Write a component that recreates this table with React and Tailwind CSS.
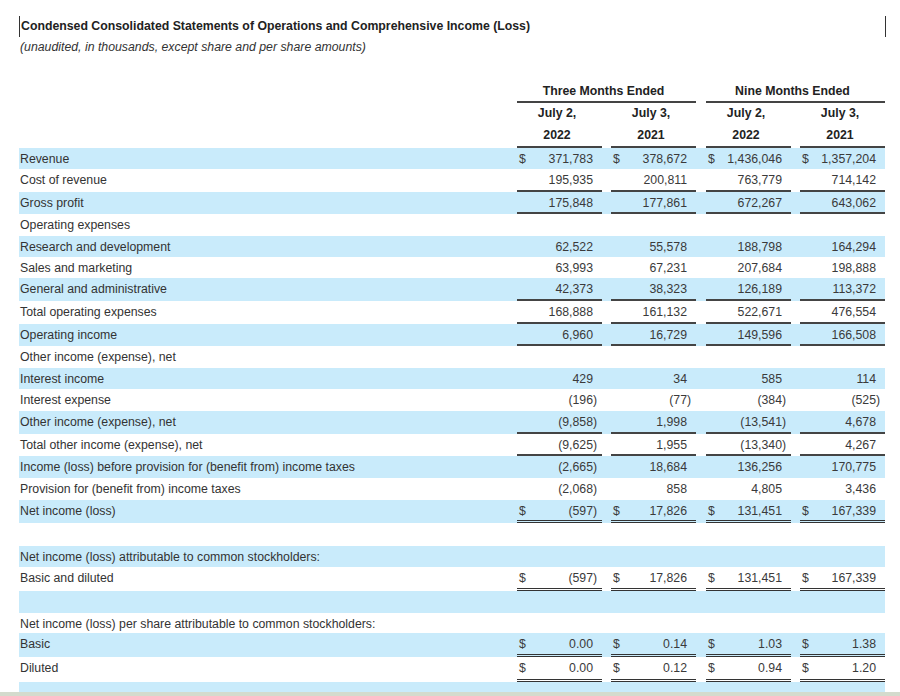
import React from "react";

const SINGLE = "border-b-2 border-[#444]";
const DOUBLE = "border-b-[3px] border-double border-[#333]";

const rows = [
  { label: "Revenue", bg: true, h: "h-[21px]", d: true, vals: ["371,783", "378,672", "1,436,046", "1,357,204"] },
  { label: "Cost of revenue", bg: false, h: "h-[23px]", b: SINGLE, vals: ["195,935", "200,811", "763,779", "714,142"] },
  { label: "Gross profit", bg: true, h: "h-[22px]", b: SINGLE, vals: ["175,848", "177,861", "672,267", "643,062"] },
  { label: "Operating expenses", bg: false, h: "h-[22px]" },
  { label: "Research and development", bg: true, h: "h-[21px]", vals: ["62,522", "55,578", "188,798", "164,294"] },
  { label: "Sales and marketing", bg: false, h: "h-[21px]", vals: ["63,993", "67,231", "207,684", "198,888"] },
  { label: "General and administrative", bg: true, h: "h-[23px]", b: SINGLE, vals: ["42,373", "38,323", "126,189", "113,372"] },
  { label: "Total operating expenses", bg: false, h: "h-[23px]", b: SINGLE, vals: ["168,888", "161,132", "522,671", "476,554"] },
  { label: "Operating income", bg: true, h: "h-[22px]", b: SINGLE, vals: ["6,960", "16,729", "149,596", "166,508"] },
  { label: "Other income (expense), net", bg: false, h: "h-[22px]" },
  { label: "Interest income", bg: true, h: "h-[21px]", vals: ["429", "34", "585", "114"] },
  { label: "Interest expense", bg: false, h: "h-[22px]", vals: ["(196)", "(77)", "(384)", "(525)"] },
  { label: "Other income (expense), net", bg: true, h: "h-[23px]", b: SINGLE, vals: ["(9,858)", "1,998", "(13,541)", "4,678"] },
  { label: "Total other income (expense), net", bg: false, h: "h-[22px]", b: SINGLE, vals: ["(9,625)", "1,955", "(13,340)", "4,267"] },
  { label: "Income (loss) before provision for (benefit from) income taxes", bg: true, h: "h-[22px]", vals: ["(2,665)", "18,684", "136,256", "170,775"] },
  { label: "Provision for (benefit from) income taxes", bg: false, h: "h-[22px]", vals: ["(2,068)", "858", "4,805", "3,436"] },
  { label: "Net income (loss)", bg: true, h: "h-[23px]", d: true, b: DOUBLE, vals: ["(597)", "17,826", "131,451", "167,339"] },
  { label: "", bg: false, h: "h-[23px]" },
  { label: "Net income (loss) attributable to common stockholders:", bg: true, h: "h-[21px]" },
  { label: "Basic and diluted", bg: false, h: "h-[24px]", d: true, b: DOUBLE, vals: ["(597)", "17,826", "131,451", "167,339"] },
  { label: "", bg: true, h: "h-[22px]" },
  { label: "Net income (loss) per share attributable to common stockholders:", bg: false, h: "h-[20px]" },
  { label: "Basic", bg: true, h: "h-[24px]", d: true, b: DOUBLE, vals: ["0.00", "0.14", "1.03", "1.38"] },
  { label: "Diluted", bg: false, h: "h-[25px]", d: true, b: DOUBLE, vals: ["0.00", "0.12", "0.94", "1.20"] },
  { label: "", bg: true, h: "h-[10px]" },
];

const spacers = ["w-[9px]", "w-[9px]", "w-[10px]", "w-[9px]"];

function Value({ v }) {
  if (v.endsWith(")")) {
    return (
      <span>
        {v.slice(0, -1)}
        <span className="inline-block w-0">)</span>
      </span>
    );
  }
  return <span>{v}</span>;
}

function Row({ r }) {
  return (
    <div className={`flex ${r.h} ${r.bg ? "bg-[#c9ebfb]" : ""}`}>
      <div className="w-[489px] pl-[1px] pt-[1px] leading-[20px] whitespace-nowrap">{r.label}</div>
      {[0, 1, 2, 3].map((i) => (
        <React.Fragment key={i}>
          <div className={spacers[i]} />
          <div className={`w-[85px] h-full ${r.vals && r.b ? r.b : ""}`}>
            {r.vals && (
              <div className="flex justify-between pl-[2px] pr-[9px] pt-[1px] leading-[20px] text-[#3a3a3a]">
                <span>{r.d ? "$" : ""}</span>
                <Value v={r.vals[i]} />
              </div>
            )}
          </div>
        </React.Fragment>
      ))}
    </div>
  );
}

export default function App() {
  return (
    <div className="w-[900px] h-[696px] bg-white overflow-hidden flex flex-col font-['Liberation_Sans',Arial,sans-serif] text-[12.3px] text-[#333]">
      <div className="mt-[16px] ml-[19px] w-[867px] h-[21px] border-l border-r border-[#333] pl-[1px] flex items-center font-bold text-[#222]">
        Condensed Consolidated Statements of Operations and Comprehensive Income (Loss)
      </div>
      <div className="ml-[20px] leading-[20px] italic text-[#333]">
        (unaudited, in thousands, except share and per share amounts)
      </div>
      <div className="mt-[23px] ml-[19px] w-[866px] flex flex-col">
        <div className="flex h-[23px] font-bold text-[#222]">
          <div className="w-[489px]" />
          <div className="w-[9px]" />
          <div className={`w-[179px] text-center pr-[6px] pt-[1px] leading-[20px] ${SINGLE}`}>Three Months Ended</div>
          <div className="w-[10px]" />
          <div className={`w-[179px] text-center pr-[6px] pt-[1px] leading-[20px] ${SINGLE}`}>Nine Months Ended</div>
        </div>
        <div className="flex h-[20px] font-bold text-[#222]">
          <div className="w-[489px]" />
          {["July 2,", "July 3,", "July 2,", "July 3,"].map((t, i) => (
            <React.Fragment key={i}>
              <div className={spacers[i]} />
              <div className="w-[85px] text-center pr-[5px] pt-[1px] leading-[18px]">{t}</div>
            </React.Fragment>
          ))}
        </div>
        <div className="flex h-[25px] font-bold text-[#222]">
          <div className="w-[489px]" />
          {["2022", "2021", "2022", "2021"].map((t, i) => (
            <React.Fragment key={i}>
              <div className={spacers[i]} />
              <div className={`w-[85px] text-center pr-[5px] pt-[1px] leading-[22px] ${SINGLE}`}>{t}</div>
            </React.Fragment>
          ))}
        </div>
        {rows.map((r, i) => (
          <Row key={i} r={r} />
        ))}
      </div>
      <div className="mt-auto h-[4px] bg-[#d4dbcd]" />
    </div>
  );
}
